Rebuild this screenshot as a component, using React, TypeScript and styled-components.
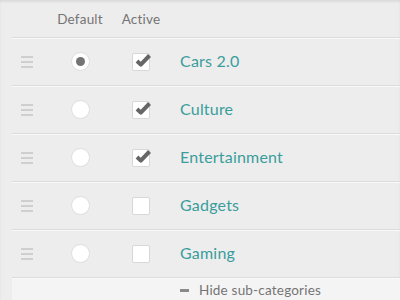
import React from "react";
import styled, { createGlobalStyle } from "styled-components";

const Global = createGlobalStyle`
  html, body { margin: 0; padding: 0; background: #ededed; }
  body { font-family: "Lato", "Open Sans", sans-serif; }
`;

const Page = styled.div`
  width: 400px;
  height: 300px;
  overflow: hidden;
  background: #ededed;
  box-shadow: inset 0 2px 2px rgba(0, 0, 0, 0.08);
  padding-left: 12px;
  box-sizing: border-box;
`;

const Grid = styled.div`
  display: grid;
  grid-template-columns: 30px 76px 46px 1fr;
  align-items: center;
`;

const Header = styled(Grid)`
  height: 37px;
  font-size: 13.5px;
  color: #747474;
`;

const HeadCell = styled.div`
  text-align: center;
  padding-top: 1px;
  letter-spacing: 0.2px;
`;

const Row = styled(Grid)`
  height: 48px;
  border-top: 1px solid #dcdcdc;
  box-shadow: inset 0 1px 0 #f9f9f9;
  box-sizing: border-box;
`;

const Cell = styled.div`
  display: flex;
  justify-content: center;
  align-items: center;
`;

const Handle = styled.div`
  display: flex;
  flex-direction: column;
  gap: 3px;
  width: 12px;
  & > span {
    height: 2px;
    background: #cfcfcf;
    display: block;
  }
`;

const Radio = styled.div<{ $on?: boolean }>`
  width: 17px;
  height: 17px;
  border-radius: 50%;
  background: #fff;
  border: 1px solid #dedede;
  display: flex;
  align-items: center;
  justify-content: center;
  &::after {
    content: "";
    display: ${(p) => (p.$on ? "block" : "none")};
    width: 9px;
    height: 9px;
    border-radius: 50%;
    background: #747474;
  }
`;

const Box = styled.div`
  width: 16px;
  height: 16px;
  border-radius: 2px;
  background: #fff;
  border: 1px solid #d8d8d8;
  position: relative;
  & > svg {
    position: absolute;
    left: 1px;
    top: -3px;
  }
`;

const Label = styled.div`
  padding-left: 16px;
  font-size: 16px;
  color: #3a9d9c;
  padding-bottom: 3px;
  letter-spacing: 0.2px;
`;

const Footer = styled.div`
  height: 24px;
  border-top: 1px solid #dcdcdc;
  background: #f4f4f4;
  box-shadow: inset 0 1px 0 #fafafa;
  display: flex;
  align-items: center;
  padding-left: 168px;
  font-size: 13.5px;
  color: #747474;
  gap: 10px;
  letter-spacing: 0.2px;
`;

const Minus = styled.span`
  display: block;
  width: 9px;
  height: 3px;
  background: #8a8a8a;
`;

const Check = () => (
  <svg width="18" height="18" viewBox="0 0 18 18">
    <path
      d="M3 10 L6.8 13.6 L15.5 4.5"
      fill="none"
      stroke="#666"
      strokeWidth="4"
      strokeLinejoin="round"
    />
  </svg>
);

const items = [
  { name: "Cars 2.0", def: true, active: true },
  { name: "Culture", def: false, active: true },
  { name: "Entertainment", def: false, active: true },
  { name: "Gadgets", def: false, active: false },
  { name: "Gaming", def: false, active: false },
];

export default function App() {
  return (
    <>
      <Global />
      <Page>
        <Header>
          <div />
          <HeadCell>Default</HeadCell>
          <HeadCell>Active</HeadCell>
          <div />
        </Header>
        {items.map((it) => (
          <Row key={it.name}>
            <Cell>
              <Handle>
                <span />
                <span />
                <span />
              </Handle>
            </Cell>
            <Cell>
              <Radio $on={it.def} />
            </Cell>
            <Cell>
              <Box>{it.active && <Check />}</Box>
            </Cell>
            <Label>{it.name}</Label>
          </Row>
        ))}
        <Footer>
          <Minus />
          <span>Hide sub-categories</span>
        </Footer>
      </Page>
    </>
  );
}
